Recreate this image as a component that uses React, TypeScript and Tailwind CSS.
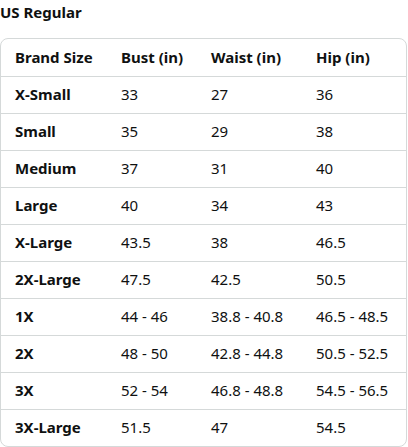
const headers = ["Brand Size", "Bust (in)", "Waist (in)", "Hip (in)"];

const rows: string[][] = [
  ["X-Small", "33", "27", "36"],
  ["Small", "35", "29", "38"],
  ["Medium", "37", "31", "40"],
  ["Large", "40", "34", "43"],
  ["X-Large", "43.5", "38", "46.5"],
  ["2X-Large", "47.5", "42.5", "50.5"],
  ["1X", "44 - 46", "38.8 - 40.8", "46.5 - 48.5"],
  ["2X", "48 - 50", "42.8 - 44.8", "50.5 - 52.5"],
  ["3X", "52 - 54", "46.8 - 48.8", "54.5 - 56.5"],
  ["3X-Large", "51.5", "47", "54.5"],
];

// fixed column widths so text lines up with the reference
const grid = "grid grid-cols-[106px_90px_105px_1fr] h-[37px] items-center pb-[2px]";

export default function App() {
  return (
    <div className="w-[408px] h-[447px] bg-white text-[#0f1111] font-['Noto_Sans',sans-serif] overflow-hidden">
      <h2 className="text-[15px] font-bold leading-[26px] -mt-[1px]">US Regular</h2>

      <div className="mt-[13px] w-[407px] border border-[#d5d9d9] rounded-[8px] text-[15px] leading-[20px]">
        <div className={grid}>
          {headers.map((h) => (
            <div key={h} className="pl-[14px] font-bold">
              {h}
            </div>
          ))}
        </div>
        {rows.map((r) => (
          <div key={r[0]} className={`${grid} border-t border-[#d5d9d9]`}>
            {r.map((cell, i) => (
              <div key={i} className={`pl-[14px] ${i === 0 ? "font-bold" : ""}`}>
                {cell}
              </div>
            ))}
          </div>
        ))}
      </div>
    </div>
  );
}
